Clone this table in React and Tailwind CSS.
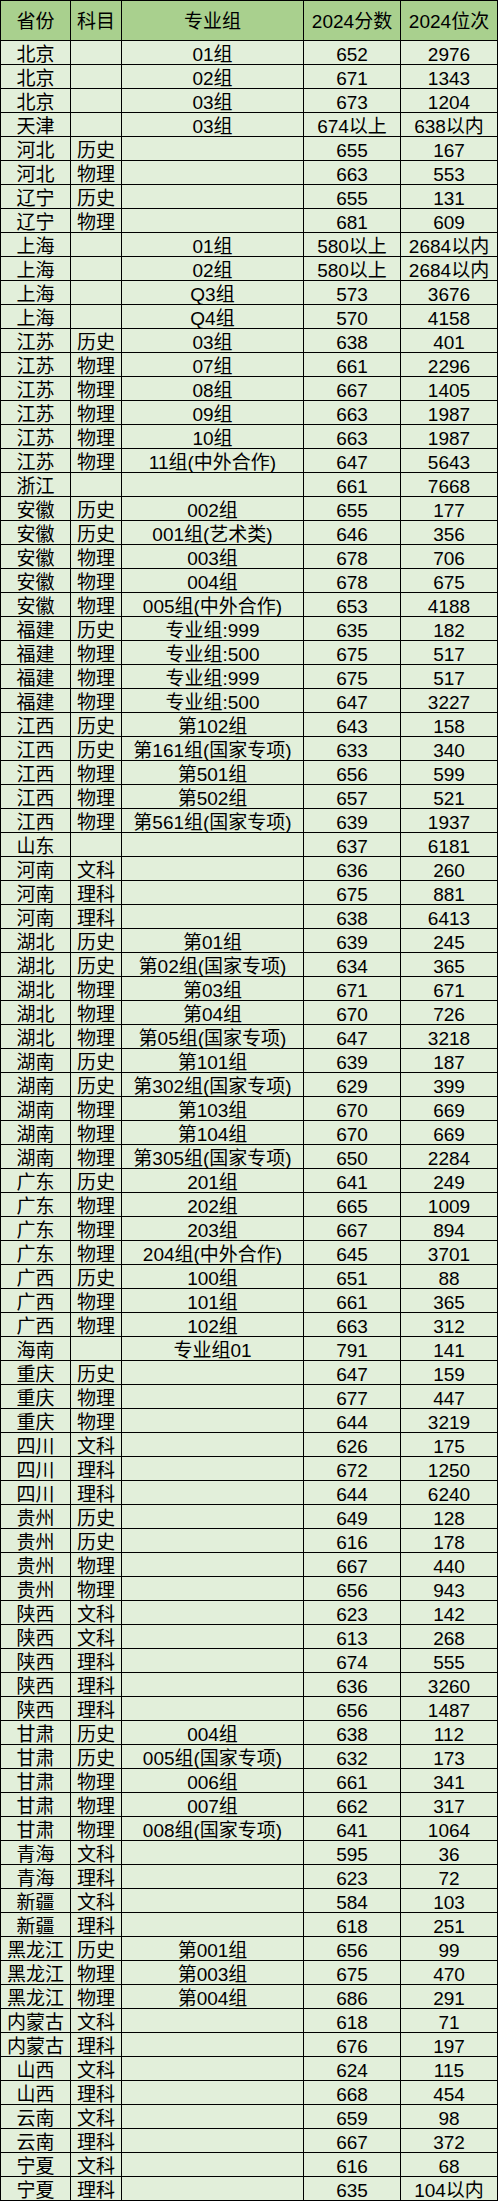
const headers = ['省份', '科目', '专业组', '2024分数', '2024位次'];

// province | subject | group | score | rank
const rows = [
  ['北京', '', '01组', '652', '2976'],
  ['北京', '', '02组', '671', '1343'],
  ['北京', '', '03组', '673', '1204'],
  ['天津', '', '03组', '674以上', '638以内'],
  ['河北', '历史', '', '655', '167'],
  ['河北', '物理', '', '663', '553'],
  ['辽宁', '历史', '', '655', '131'],
  ['辽宁', '物理', '', '681', '609'],
  ['上海', '', '01组', '580以上', '2684以内'],
  ['上海', '', '02组', '580以上', '2684以内'],
  ['上海', '', 'Q3组', '573', '3676'],
  ['上海', '', 'Q4组', '570', '4158'],
  ['江苏', '历史', '03组', '638', '401'],
  ['江苏', '物理', '07组', '661', '2296'],
  ['江苏', '物理', '08组', '667', '1405'],
  ['江苏', '物理', '09组', '663', '1987'],
  ['江苏', '物理', '10组', '663', '1987'],
  ['江苏', '物理', '11组(中外合作)', '647', '5643'],
  ['浙江', '', '', '661', '7668'],
  ['安徽', '历史', '002组', '655', '177'],
  ['安徽', '历史', '001组(艺术类)', '646', '356'],
  ['安徽', '物理', '003组', '678', '706'],
  ['安徽', '物理', '004组', '678', '675'],
  ['安徽', '物理', '005组(中外合作)', '653', '4188'],
  ['福建', '历史', '专业组:999', '635', '182'],
  ['福建', '物理', '专业组:500', '675', '517'],
  ['福建', '物理', '专业组:999', '675', '517'],
  ['福建', '物理', '专业组:500', '647', '3227'],
  ['江西', '历史', '第102组', '643', '158'],
  ['江西', '历史', '第161组(国家专项)', '633', '340'],
  ['江西', '物理', '第501组', '656', '599'],
  ['江西', '物理', '第502组', '657', '521'],
  ['江西', '物理', '第561组(国家专项)', '639', '1937'],
  ['山东', '', '', '637', '6181'],
  ['河南', '文科', '', '636', '260'],
  ['河南', '理科', '', '675', '881'],
  ['河南', '理科', '', '638', '6413'],
  ['湖北', '历史', '第01组', '639', '245'],
  ['湖北', '历史', '第02组(国家专项)', '634', '365'],
  ['湖北', '物理', '第03组', '671', '671'],
  ['湖北', '物理', '第04组', '670', '726'],
  ['湖北', '物理', '第05组(国家专项)', '647', '3218'],
  ['湖南', '历史', '第101组', '639', '187'],
  ['湖南', '历史', '第302组(国家专项)', '629', '399'],
  ['湖南', '物理', '第103组', '670', '669'],
  ['湖南', '物理', '第104组', '670', '669'],
  ['湖南', '物理', '第305组(国家专项)', '650', '2284'],
  ['广东', '历史', '201组', '641', '249'],
  ['广东', '物理', '202组', '665', '1009'],
  ['广东', '物理', '203组', '667', '894'],
  ['广东', '物理', '204组(中外合作)', '645', '3701'],
  ['广西', '历史', '100组', '651', '88'],
  ['广西', '物理', '101组', '661', '365'],
  ['广西', '物理', '102组', '663', '312'],
  ['海南', '', '专业组01', '791', '141'],
  ['重庆', '历史', '', '647', '159'],
  ['重庆', '物理', '', '677', '447'],
  ['重庆', '物理', '', '644', '3219'],
  ['四川', '文科', '', '626', '175'],
  ['四川', '理科', '', '672', '1250'],
  ['四川', '理科', '', '644', '6240'],
  ['贵州', '历史', '', '649', '128'],
  ['贵州', '历史', '', '616', '178'],
  ['贵州', '物理', '', '667', '440'],
  ['贵州', '物理', '', '656', '943'],
  ['陕西', '文科', '', '623', '142'],
  ['陕西', '文科', '', '613', '268'],
  ['陕西', '理科', '', '674', '555'],
  ['陕西', '理科', '', '636', '3260'],
  ['陕西', '理科', '', '656', '1487'],
  ['甘肃', '历史', '004组', '638', '112'],
  ['甘肃', '历史', '005组(国家专项)', '632', '173'],
  ['甘肃', '物理', '006组', '661', '341'],
  ['甘肃', '物理', '007组', '662', '317'],
  ['甘肃', '物理', '008组(国家专项)', '641', '1064'],
  ['青海', '文科', '', '595', '36'],
  ['青海', '理科', '', '623', '72'],
  ['新疆', '文科', '', '584', '103'],
  ['新疆', '理科', '', '618', '251'],
  ['黑龙江', '历史', '第001组', '656', '99'],
  ['黑龙江', '物理', '第003组', '675', '470'],
  ['黑龙江', '物理', '第004组', '686', '291'],
  ['内蒙古', '文科', '', '618', '71'],
  ['内蒙古', '理科', '', '676', '197'],
  ['山西', '文科', '', '624', '115'],
  ['山西', '理科', '', '668', '454'],
  ['云南', '文科', '', '659', '98'],
  ['云南', '理科', '', '667', '372'],
  ['宁夏', '文科', '', '616', '68'],
  ['宁夏', '理科', '', '635', '104以内'],
];

export default function App() {
  return (
    <div className="w-[498px] bg-white text-black font-['Liberation_Sans','Noto_Sans_CJK_SC',sans-serif] text-[19px]">
      <div className="grid grid-cols-[70px_51px_182px_97px_97px] border-r border-b border-black">
        {headers.map((h) => (
          <div
            key={h}
            className="h-[40px] border-l border-t border-black bg-[#a9d08e] text-center leading-[39px] pt-[1px] whitespace-nowrap overflow-hidden"
          >
            {h}
          </div>
        ))}
        {rows.map((row, i) =>
          row.map((cell, j) => (
            <div
              key={i + '-' + j}
              className="h-[24px] border-l border-t border-black bg-[#e2efda] text-center leading-[23px] pt-[2px] whitespace-nowrap overflow-hidden"
            >
              {cell}
            </div>
          ))
        )}
      </div>
    </div>
  );
}
